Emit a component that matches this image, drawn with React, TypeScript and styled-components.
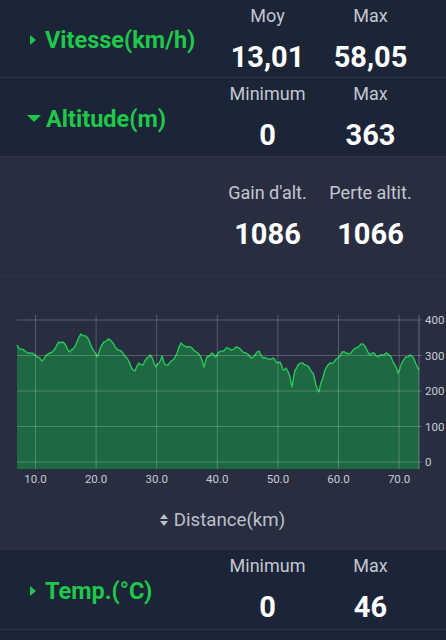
import React from 'react';
import styled, { createGlobalStyle } from 'styled-components';

const GlobalStyle = createGlobalStyle`
  html, body {
    margin: 0;
    padding: 0;
    background: #1c2437;
    font-family: Roboto, "Noto Sans", "Liberation Sans", sans-serif;
  }
`;

const Page = styled.div`
  width: 446px;
  height: 640px;
  overflow: hidden;
  background: #1c2437;
`;

const StatRow = styled.div<{ $height: number; $bg?: string }>`
  display: grid;
  grid-template-columns: 1fr 103px 103px;
  padding-right: 24px;
  height: ${(p) => p.$height}px;
  box-sizing: border-box;
  border-bottom: 1px solid #2e3547;
  background: ${(p) => p.$bg ?? '#1c2437'};
`;

const Title = styled.div`
  display: flex;
  align-items: center;
  gap: 5px;
  padding-left: 28px;
  padding-top: 3px;
  color: #1fc84b;
  font-size: 23.5px;
  font-weight: 700;
  white-space: nowrap;
`;

const Caret = styled.span<{ $open: boolean }>`
  display: inline-block;
  width: 0;
  height: 0;
  ${(p) =>
    p.$open
      ? `border-left: 7px solid transparent;
         border-right: 7px solid transparent;
         border-top: 7px solid #1fc84b;
         margin-left: -1px;`
      : `border-top: 5px solid transparent;
         border-bottom: 5px solid transparent;
         border-left: 6px solid #1fc84b;
         margin-left: 2px;
         margin-right: 4px;`}
`;

const StatCol = styled.div<{ $top: number }>`
  display: flex;
  flex-direction: column;
  align-items: center;
  padding-top: ${(p) => p.$top}px;
`;

const StatLabel = styled.div`
  color: #c3c7d0;
  font-size: 18px;
  line-height: 24px;
  white-space: nowrap;
`;

const StatValue = styled.div`
  color: #ffffff;
  font-size: 29px;
  font-weight: 700;
  line-height: 34px;
  margin-top: 12px;
`;

const Expanded = styled.div`
  background: #282d40;
`;

const ChartSection = styled.div`
  display: flex;
  flex-direction: column;
  height: 274px;
  border-bottom: 1px solid #2e3547;
  box-sizing: border-box;
`;

const ChartSvg = styled.svg`
  display: block;
  width: 446px;
  height: 224px;
`;

const Caption = styled.div`
  display: flex;
  justify-content: center;
  align-items: center;
  gap: 5px;
  padding-top: 8px;
  margin-left: -2px;
  color: #bcc0ca;
  font-size: 18.7px;
  line-height: 24px;
`;

type Stat = { label: string; value: string };

const StatBlock = ({ stats, top }: { stats: Stat[]; top: number }) => (
  <>
    {stats.map((s) => (
      <StatCol key={s.label} $top={top}>
        <StatLabel>{s.label}</StatLabel>
        <StatValue>{s.value}</StatValue>
      </StatCol>
    ))}
  </>
);

// elevation profile, page coordinates
const profile: [number, number][] = [
  [17, 345], [20, 349], [25, 351], [30, 353], [35, 355], [38, 357], [41.7, 361], [45, 357],
  [50, 353], [55, 349], [59, 342], [63, 342], [67, 348], [70, 352], [73, 349], [77, 342],
  [81, 334], [86, 336], [90, 343], [95, 353], [97, 357], [100, 349], [104, 342], [108, 339],
  [113, 343], [118, 350], [123, 353], [127, 358], [131, 367], [135, 371], [139, 363], [143, 365],
  [147, 358], [150, 355], [153, 360], [156, 367], [159, 363], [162, 356], [164, 363], [168, 365],
  [173, 360], [177, 353], [181, 343], [187, 347], [192, 348], [198, 353], [202, 360], [204, 367],
  [207, 357], [212, 353], [215, 357], [218, 353], [223, 351], [226, 348], [231, 350], [236, 347],
  [241, 350], [246, 353], [251, 358], [255, 355], [259, 351], [263, 358], [268, 359], [273, 358],
  [276, 362], [280, 362], [283, 370], [286, 368], [290, 377], [292, 387], [295, 370], [298, 365],
  [303, 363], [306, 365], [310, 369], [313, 373], [316, 385], [319, 392], [321, 383], [325, 370],
  [330, 363], [334, 362], [338, 358], [342, 352], [346, 353], [351, 353], [356, 348], [361, 344],
  [365, 346], [370, 355], [374, 353], [378, 357], [382, 355], [386, 353], [391, 357], [395, 365],
  [398, 373], [401, 365], [406, 357], [410, 355], [414, 359], [419, 370],
];

const TOP = 276;
const plotLeft = 17;
const plotRight = 419;
const plotTop = 320 - TOP;
const plotBottom = 469 - TOP;
const yTicks = [400, 300, 200, 100, 0];
const yOf = (v: number) => 462 - TOP - v * 0.355;
const xTicks = [10, 20, 30, 40, 50, 60, 70];
const xOf = (km: number) => 35.5 + (km - 10) * 6.06;

// small gps-like wobble between the sampled points
const wobbly = profile.flatMap(([x, y], i) => {
  if (i === profile.length - 1) return [[x, y]];
  const [nx, ny] = profile[i + 1];
  const off = i % 2 === 0 ? 0.9 : -0.9;
  return [[x, y], [(x + nx) / 2, (y + ny) / 2 + off]];
});

const ElevationChart = () => {
  const line = wobbly.map(([x, y]) => `${x},${y - TOP}`).join(' ');
  const area = `${plotLeft},${plotBottom} ${line} ${plotRight},${plotBottom}`;
  return (
    <ChartSvg viewBox="0 0 446 224">
      <polygon points={area} fill="#1e6842" />
      <polyline points={line} fill="none" stroke="#25c957" strokeWidth={1.4} strokeLinejoin="round" />
      {yTicks.map((v) => (
        <line key={v} x1={plotLeft} x2={plotRight + 3} y1={yOf(v)} y2={yOf(v)} stroke="rgba(255,255,255,0.22)" strokeWidth={1} />
      ))}
      {xTicks.map((k) => (
        <line key={k} x1={xOf(k)} x2={xOf(k)} y1={plotTop - 5} y2={plotBottom} stroke="rgba(255,255,255,0.22)" strokeWidth={1} />
      ))}
      <line x1={plotRight} x2={plotRight} y1={plotTop - 5} y2={plotBottom} stroke="rgba(255,255,255,0.3)" strokeWidth={1} />
      {yTicks.map((v) => (
        <text key={v} x={425} y={yOf(v)} dominantBaseline="central" fill="#c8ccd4" fontSize={11.5} fontFamily="Roboto, sans-serif">
          {v}
        </text>
      ))}
      {xTicks.map((k) => (
        <text key={k} x={xOf(k)} y={203} textAnchor="middle" dominantBaseline="central" fill="#c8ccd4" fontSize={11.5} fontFamily="Roboto, sans-serif">
          {k.toFixed(1)}
        </text>
      ))}
    </ChartSvg>
  );
};

const SortIcon = () => (
  <svg width="10" height="14" viewBox="0 0 10 14">
    <path d="M5 1 L9 6 H1 Z M5 13 L1 8 H9 Z" fill="#bcc0ca" />
  </svg>
);

export default function App() {
  return (
    <Page>
      <GlobalStyle />
      <StatRow $height={78}>
        <Title>
          <Caret $open={false} />
          Vitesse(km/h)
        </Title>
        <StatBlock top={4} stats={[{ label: 'Moy', value: '13,01' }, { label: 'Max', value: '58,05' }]} />
      </StatRow>
      <StatRow $height={79}>
        <Title>
          <Caret $open />
          Altitude(m)
        </Title>
        <StatBlock top={4} stats={[{ label: 'Minimum', value: '0' }, { label: 'Max', value: '363' }]} />
      </StatRow>
      <Expanded>
        <StatRow $height={119} $bg="#282d40">
          <div />
          <StatBlock top={24} stats={[{ label: "Gain d'alt.", value: '1086' }, { label: 'Perte altit.', value: '1066' }]} />
        </StatRow>
        <ChartSection>
          <ElevationChart />
          <Caption>
            <SortIcon />
            Distance(km)
          </Caption>
        </ChartSection>
      </Expanded>
      <StatRow $height={80}>
        <Title>
          <Caret $open={false} />
          Temp.(°C)
        </Title>
        <StatBlock top={4} stats={[{ label: 'Minimum', value: '0' }, { label: 'Max', value: '46' }]} />
      </StatRow>
      <StatRow $height={78} />
    </Page>
  );
}
